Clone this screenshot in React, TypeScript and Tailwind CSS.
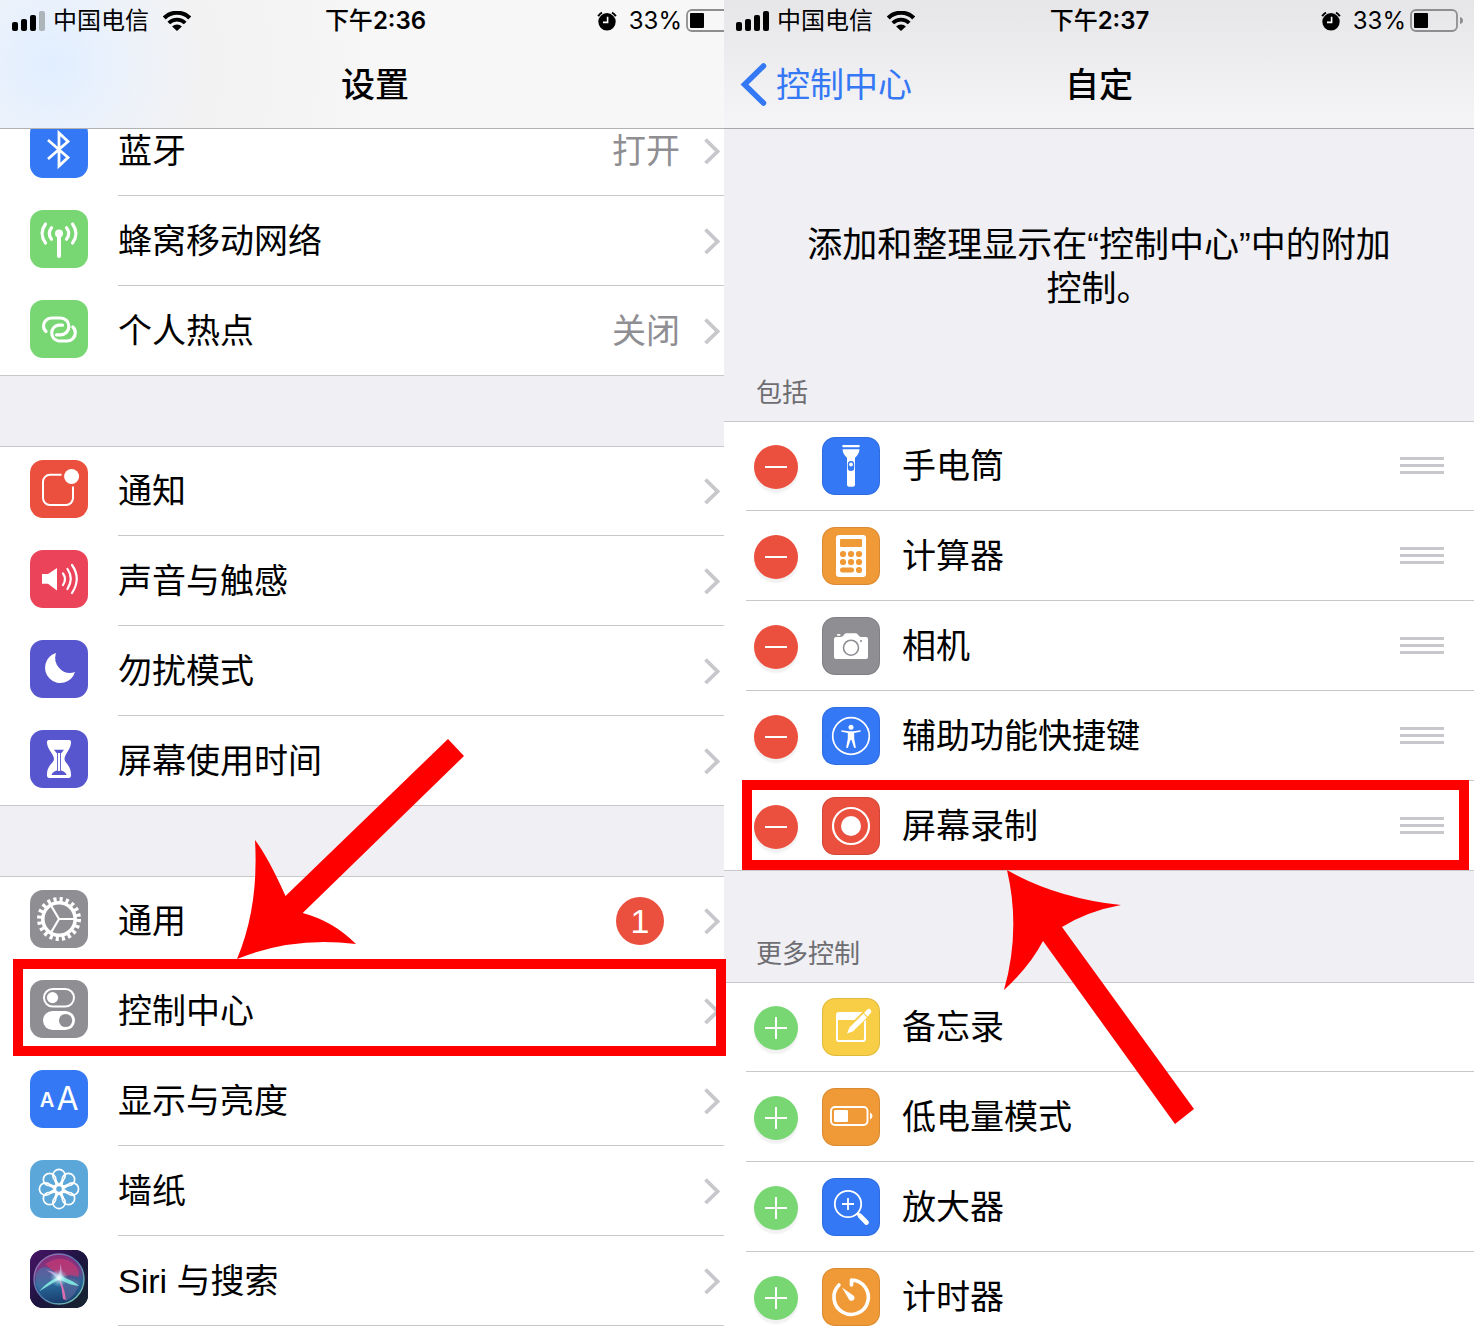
import type { ReactNode } from "react";

const ROTATIONS = [0, 45, 90, 135, 180, 225, 270, 315];

/* ---------- status bar ---------- */

function StatusBar({ time, weakSignal }: { time: string; weakSignal?: boolean }) {
  return (
    <div className="grid h-[41px] grid-cols-[1fr_auto_1fr] items-center pr-[11px] pl-3 font-['Inter','Noto_Sans_CJK_SC',sans-serif] text-2xl leading-8">
      <div className="flex items-center">
        <svg width="33" height="20" viewBox="0 0 33 20" aria-hidden="true">
          <rect x="0" y="11" width="6" height="9" rx="2" />
          <rect x="9" y="8" width="6" height="12" rx="2" />
          <rect x="18" y="4" width="6" height="16" rx="2" />
          <rect x="27" y="0" width="6" height="20" rx="2" fill={weakSignal ? "#adb4ba" : "#000"} />
        </svg>
        <span className="ml-2">中国电信</span>
        <svg className="ml-3.5" width="28" height="20" viewBox="0 0 28 20" aria-hidden="true">
          <path d="M1.3 7a18 18 0 0 1 25.400 0" fill="none" stroke="#000" strokeWidth="4.2" />
          <path d="M5.800 12a11.6 11.6 0 0 1 16.400 0" fill="none" stroke="#000" strokeWidth="3.8" />
          <path d="M14 20l-4.900-4.400a6.8 6.8 0 0 1 9.800 0z" />
        </svg>
      </div>
      <span className="font-semibold">
        <span className="font-medium">下午</span>
        {time}
      </span>
      <div className="flex items-center justify-end">
        <svg width="20" height="20" viewBox="0 0 20 20" aria-hidden="true">
          <circle cx="10" cy="10.8" r="8.7" />
          <path d="M1.2 5.2A9 9 0 0 1 5 1.6M18.8 5.2A9 9 0 0 0 15 1.6" fill="none" stroke="#000" strokeWidth="2" />
          <path d="M10.6 5.8v5.6H6" fill="none" stroke="#fff" strokeWidth="1.6" />
        </svg>
        <span className="ml-3">33%</span>
        <svg className="ml-1" width="53" height="23" viewBox="0 0 53 23" aria-label="33%">
          <rect x="1" y="1" width="46" height="21" rx="5" fill="none" stroke="#8e8e90" strokeWidth="1.8" />
          <rect x="4" y="4" width="14" height="15" rx="1" />
          <path d="M50 8q3 1 3 3.500t-3 3.500z" fill="#8e8e90" />
        </svg>
      </div>
    </div>
  );
}

/* ---------- glyphs, all on a 58 × 58 tile ---------- */

const line = { fill: "none", stroke: "#fff" } as const;

const glyphs: Record<string, ReactNode> = {
  bluetooth: <path {...line} strokeWidth="2.800" d="M18 20l20 17.500-9 8.500V13l9 8.500L18 39" />,
  cellular: (
    <g>
      <circle cx="29" cy="23.400" r="4" fill="#fff" />
      <path {...line} strokeWidth="4" strokeLinecap="round" d="M29 24v22" />
      <path
        {...line}
        strokeWidth="3.200"
        strokeLinecap="round"
        d="M15.500 14Q8.600 23.400 15.500 33M42.500 14q6.900 9.400 0 19M21.500 17.800q-4.500 5.700 0 11.400M36.500 17.800q4.500 5.700 0 11.400"
      />
    </g>
  ),
  hotspot: (
    <path
      {...line}
      strokeWidth="3.200"
      strokeLinecap="round"
      d="M16 31.500C14.200 30 13.500 28 13.500 26A8 8 0 0 1 21.500 18H30.500A8.400 8.400 0 0 1 30.500 34.800H26.500M42.800 27C44.500 28.500 45.300 30.500 45.300 32.800A8.200 8.200 0 0 1 37 41H28.500A8 8 0 0 1 28.500 25.200H32.500"
    />
  ),
  notifications: (
    <g>
      <path {...line} strokeWidth="2" d="M31.500 14.800H20a7 7 0 0 0-7 7V38a7 7 0 0 0 7 7H36a7 7 0 0 0 7-7V26.500" />
      <circle cx="41.600" cy="16.500" r="7.500" fill="#fff" />
    </g>
  ),
  sound: (
    <g>
      <path fill="#fff" d="M12 24h6l9-6v22.500l-9-6.700h-6z" />
      <path
        {...line}
        strokeWidth="2.200"
        strokeLinecap="round"
        d="M33 23.500q4 5.500 0 11.500M37.500 19q6.500 9.500 0 20M42 15q9.500 13.500 0 28"
      />
    </g>
  ),
  moon: <path fill="#fff" d="M26 13A15.300 15.300 0 1 0 45 32A15 15 0 0 1 26 13z" />,
  hourglass: (
    <g>
      <path
        fill="#fff"
        d="M19 10H39Q41.500 10 41 13C40.500 20 34.500 24 34.500 29C34.500 33 41 35 41 44.500Q41.500 48 39 48H19Q16.500 48 17 44.500C17 35 24 33 24 29C24 24 17.500 20 17 13Q16.500 10 19 10Z"
      />
      <path fill="#5856ce" d="M24 19.700h10L31 23.500V40.500q5 1.500 5.500 4.500h-15q.500-3 5.500-4.500V23.500z" />
      <path {...line} strokeWidth="2.200" d="M29 23v18" />
    </g>
  ),
  gear: (
    <g {...line}>
      <circle cx="29" cy="29" r="19.500" strokeWidth="5" strokeDasharray="3.100 3.026" />
      <circle cx="29" cy="29" r="16.200" strokeWidth="3.600" />
      <path strokeWidth="2.200" d="M29 29H45M29 29L21 15.500M29 29L21 42.500" />
    </g>
  ),
  switches: (
    <g>
      <rect {...line} x="14" y="9" width="30" height="17.500" rx="8.700" strokeWidth="2" />
      <circle cx="22.500" cy="17.600" r="5.600" fill="#fff" />
      <rect x="13" y="31" width="32" height="19" rx="9.500" fill="#fff" />
      <circle cx="35.600" cy="40.500" r="6.600" fill="#8e8e93" />
    </g>
  ),
  display: (
    <g fill="#fff" textAnchor="middle" fontFamily="Inter, sans-serif">
      <text x="17" y="37" fontSize="20" fontWeight="600">A</text>
      <text x="37.500" y="40" fontSize="32" fontWeight="400">A</text>
    </g>
  ),
  wallpaper: (
    <g {...line} strokeWidth="1.700">
      {ROTATIONS.map((deg) => (
        <path
          key={deg}
          transform={`rotate(${deg} 29 29)`}
          d="M29 25L25.500 20.500M29 25L32.500 20.500M24.600 20A6.200 6.200 0 1 1 33.400 20M24.600 20L27.500 25.500M33.400 20L30.500 25.500"
        />
      ))}
      <circle cx="29" cy="29" r="3.600" />
    </g>
  ),
  siri: (
    <g>
      <defs>
        <linearGradient id="siri-bg" x1="0" y1="0" x2="1" y2="1">
          <stop offset="0" stopColor="#4a1468" />
          <stop offset=".5" stopColor="#1d1440" />
          <stop offset="1" stopColor="#15272f" />
        </linearGradient>
        <linearGradient id="siri-orb" x1=".4" y1="0" x2=".5" y2="1">
          <stop offset="0" stopColor="#8a2a78" />
          <stop offset=".35" stopColor="#7a3a85" />
          <stop offset=".6" stopColor="#28699a" />
          <stop offset="1" stopColor="#183a6b" />
        </linearGradient>
        <linearGradient id="siri-ring" x1="0" y1="0" x2="1" y2="1">
          <stop offset="0" stopColor="#a86fb4" />
          <stop offset=".5" stopColor="#4f79ae" />
          <stop offset="1" stopColor="#82d8b4" />
        </linearGradient>
        <radialGradient id="siri-glow">
          <stop offset="0" stopColor="#fff" />
          <stop offset=".4" stopColor="#c9f4ff" stopOpacity=".6" />
          <stop offset="1" stopColor="#7fdcec" stopOpacity="0" />
        </radialGradient>
      </defs>
      <rect width="58" height="58" fill="url(#siri-bg)" />
      <circle cx="29" cy="29" r="25" fill="url(#siri-orb)" stroke="url(#siri-ring)" strokeWidth="1.400" />
      <path fill="#d63a70" opacity=".6" d="M15 14Q32 3 45 15Q51 22 48 27Q38 23 29 28Q22 20 15 14z" />
      <path fill="#4a72a8" opacity=".7" d="M6 24Q10 15 19 18Q27 22 29 28Q20 38 9 40Q5 32 6 24z" />
      <path fill="#5a679c" opacity=".7" d="M30 29Q42 26 50 32Q46 46 36 51Q32 40 30 29z" />
      <path fill="#7fe6dc" opacity=".95" d="M9 41.500Q16 33 26 28L30 24L35 28Q44 31 49 36Q39 35 33 31L28 30Q19 35 9 41.500z" />
      <path fill="#ee72b4" opacity=".9" d="M29 29Q34 35 36 50L33 49Q32 38 29 29z" />
      <path fill="#d9b4ea" opacity=".7" d="M30 13Q33 22 31 29L27 28Q20 22 16 20Q26 22 28 25Q31 20 30 13z" />
      <circle cx="29" cy="28" r="9" fill="url(#siri-glow)" />
    </g>
  ),
  flashlight: (
    <g fill="#fff">
      <rect x="20.300" y="8" width="17.400" height="2.200" rx=".8" />
      <path d="M20.500 12.300h17q-.300 4.700-4.500 8.500v27q0 2-2 2h-4q-2 0-2-2v-27q-4.200-3.800-4.500-8.500z" />
      <rect x="25.800" y="24" width="6.400" height="10" rx="3.200" fill="#3478f6" />
      <circle cx="29" cy="27.500" r="1.900" />
    </g>
  ),
  calculator: (
    <g>
      <rect x="14" y="8" width="30" height="42" rx="3" fill="#fff" />
      <g fill="#f09a37">
        <rect x="18" y="12" width="22" height="8" rx="1" />
        {[21, 29, 37].map((x) => (
          <g key={x}>
            <circle cx={x} cy="27" r="3.100" />
            <circle cx={x} cy="35" r="3.100" />
          </g>
        ))}
        <rect x="18" y="40.500" width="14" height="5" rx="2.500" />
        <circle cx="37" cy="43" r="3.100" />
      </g>
    </g>
  ),
  camera: (
    <g>
      <path
        fill="#fff"
        d="M14 20h5q2.500-.500 3.500-3l1.500-.700h10l1.500.700q1.500 2.500 3 3H44q2 0 2 2v18q0 2-2 2H14q-2 0-2-2V22q0-2 2-2zM15 18q0-1 1-1h1.500q1 0 1 1v.800H15z"
      />
      <circle cx="29" cy="30.700" r="7.500" fill="none" stroke="#8e8e93" strokeWidth="1.600" />
      <circle cx="39" cy="24" r="1.100" fill="#8e8e93" />
    </g>
  ),
  accessibility: (
    <g>
      <circle {...line} cx="29" cy="29" r="18.300" strokeWidth="1.700" />
      <circle cx="29" cy="20.300" r="2.500" fill="#fff" />
      <path
        fill="#fff"
        d="M19.500 23.200l7 1.100h5l7-1.100q.800.900-.200 1.500l-6.100 1.300v5.500l1.600 8.700q-.700 1.300-1.700.600L29.500 33h-1l-2.600 7.800q-1 .700-1.700-.600l1.600-8.700V26l-6.100-1.300q-1-.600-.200-1.500z"
      />
    </g>
  ),
  record: (
    <g>
      <circle {...line} cx="29" cy="29" r="18" strokeWidth="2.200" />
      <circle cx="29" cy="29" r="10" fill="#fff" />
    </g>
  ),
  notes: (
    <g>
      <rect {...line} x="15" y="15" width="28" height="28" rx="2" strokeWidth="2" />
      <path fill="#fff" d="M15 15H42L35 22H15z" />
      <path stroke="#f7ce46" strokeWidth="8" d="M30 30L49 11" />
      <path fill="#fff" d="M25 35.500L27.500 29.500L41.300 15.700L45 19.400L31.200 33.200z" />
      <path {...line} strokeWidth="5" d="M43.500 16.500L46 14" stroke="#f7ce46" />
      <path {...line} strokeWidth="5" strokeLinecap="round" d="M46 14.200l.800-.800" />
      <path fill="#fff" d="M42 15l1.800-1.800 3.600 3.600-1.800 1.800z" />
    </g>
  ),
  battery: (
    <g>
      <rect {...line} x="9" y="19" width="36.500" height="18" rx="4" strokeWidth="1.900" />
      <rect x="12" y="22" width="14" height="12" rx="1.200" fill="#fff" />
      <path fill="#fff" d="M48 24.500q2.500 1 2.500 3.500T48 31.500z" />
    </g>
  ),
  magnifier: (
    <g {...line}>
      <circle cx="26" cy="26" r="13.200" strokeWidth="1.800" />
      <path strokeWidth="1.800" d="M20 26h12M26 20v12" />
      <path strokeWidth="3" d="M35.300 35.300l3 3" />
      <path strokeWidth="4.800" strokeLinecap="round" d="M38 37.800l6.500 6.700" />
    </g>
  ),
  timer: (
    <g>
      <path {...line} strokeWidth="3.600" strokeLinecap="round" strokeLinejoin="round" d="M29.500 17V12A17.200 17.200 0 1 1 17 17" />
      <path fill="#fff" d="M20 19.500l11.300 7.900a3 3 0 1 1-4.300 4z" />
    </g>
  ),
};

function Tile({ glyph, color, className = "" }: { glyph: string; color: string; className?: string }) {
  return (
    <svg
      className={`shrink-0 overflow-hidden rounded-[13px] ${color} ${className}`}
      width="58"
      height="58"
      viewBox="0 0 58 58"
      aria-hidden="true"
    >
      {glyphs[glyph]}
    </svg>
  );
}

/* ---------- left: settings ---------- */

type Setting = { label: string; glyph: string; color: string; value?: string; badge?: number };

const settingGroups: Setting[][] = [
  [
    { label: "蓝牙", glyph: "bluetooth", color: "bg-[#3478f6]", value: "打开" },
    { label: "蜂窝移动网络", glyph: "cellular", color: "bg-[#78d673]" },
    { label: "个人热点", glyph: "hotspot", color: "bg-[#78d673]", value: "关闭" },
  ],
  [
    { label: "通知", glyph: "notifications", color: "bg-[#eb4f3d]" },
    { label: "声音与触感", glyph: "sound", color: "bg-[#eb445a]" },
    { label: "勿扰模式", glyph: "moon", color: "bg-[#5856ce]" },
    { label: "屏幕使用时间", glyph: "hourglass", color: "bg-[#5856ce]" },
  ],
  [
    { label: "通用", glyph: "gear", color: "bg-[#8e8e93]", badge: 1 },
    { label: "控制中心", glyph: "switches", color: "bg-[#8e8e93]" },
    { label: "显示与亮度", glyph: "display", color: "bg-[#3478f6]" },
    { label: "墙纸", glyph: "wallpaper", color: "bg-[#5ba7d9]" },
    { label: "Siri 与搜索", glyph: "siri", color: "bg-[#1d1440]" },
  ],
];

function SettingRow({ item, last }: { item: Setting; last: boolean }) {
  return (
    <li>
      <a href="#" className="flex h-[90px] items-center pl-[30px]">
        <Tile glyph={item.glyph} color={item.color} className="mb-1" />
        <span
          className={`ml-[30px] flex h-full flex-1 items-center border-b pr-[30px] ${
            last ? "border-transparent" : "border-[#c8c7cc]"
          }`}
        >
          <span className="flex-1">{item.label}</span>
          {item.value && <span className="mr-6 text-[#8e8e93]">{item.value}</span>}
          {item.badge && (
            <span className="mr-10 flex size-12 items-center justify-center rounded-full bg-[#eb4f3d] text-white">
              {item.badge}
            </span>
          )}
          <svg width="16" height="26" viewBox="0 0 16 26" aria-hidden="true">
            <path d="M1.500 1.500L13.500 13.500L1.500 25" fill="none" stroke="#c7c7cc" strokeWidth="3.800" />
          </svg>
        </span>
      </a>
    </li>
  );
}

function SettingsScreen() {
  return (
    <section className="relative z-10 h-full">
      <div className="h-full overflow-hidden">
        {/* the phone is a little wider than its column, so the right edge is cut */}
        <div className="-mr-[26px] flex h-full flex-col bg-[#efeff4]">
          <header className="z-10 h-[129px] shrink-0 border-b border-[#b2b2b2] bg-[#f7f7f7] bg-[radial-gradient(circle_at_50px_64px,#e1eeff_0px,#e9f1fc_60px,#eef2f8_95px,#f2f2f3_150px,#f3f3f3_220px,#f7f7f7_340px)]">
            <StatusBar time="2:36" weakSignal />
            <h1 className="py-5 text-center leading-12 font-medium">设置</h1>
          </header>
          <div className="-mt-[23px] flex flex-1 flex-col gap-[70px]">
            {settingGroups.map((group, i) => {
              const open = i === settingGroups.length - 1;
              return (
                <ul
                  key={i}
                  className={
                    open
                      ? "flex-1 bg-white shadow-[inset_0_1px_0_#c8c7cc]"
                      : "bg-white shadow-[inset_0_1px_0_#c8c7cc,inset_0_-1px_0_#c8c7cc]"
                  }
                >
                  {group.map((item, n) => (
                    <SettingRow key={item.label} item={item} last={!open && n === group.length - 1} />
                  ))}
                </ul>
              );
            })}
          </div>
        </div>
      </div>

      <div className="pointer-events-none absolute top-[959px] -right-[2px] left-[13px] h-[97px] border-10 border-[#ff0000]" />
      <svg
        className="pointer-events-none absolute top-[739px] left-[237px]"
        width="227"
        height="220"
        viewBox="237 739 227 220"
        aria-hidden="true"
      >
        <path
          fill="#f00"
          d="M237 959Q259 907 255 840Q268 857 285.500 896L448 739L464 756L302.700 913Q333 921 356 944Q293 936 237 959z"
        />
      </svg>
    </section>
  );
}

/* ---------- right: customize controls ---------- */

type Control = { label: string; glyph: string; color: string };

const included: Control[] = [
  { label: "手电筒", glyph: "flashlight", color: "bg-[#3478f6]" },
  { label: "计算器", glyph: "calculator", color: "bg-[#f09a37]" },
  { label: "相机", glyph: "camera", color: "bg-[#8e8e93]" },
  { label: "辅助功能快捷键", glyph: "accessibility", color: "bg-[#3478f6]" },
  { label: "屏幕录制", glyph: "record", color: "bg-[#eb4f3d]" },
];

const more: Control[] = [
  { label: "备忘录", glyph: "notes", color: "bg-[#f7ce46]" },
  { label: "低电量模式", glyph: "battery", color: "bg-[#f09a37]" },
  { label: "放大器", glyph: "magnifier", color: "bg-[#3478f6]" },
  { label: "计时器", glyph: "timer", color: "bg-[#f09a37]" },
];

function ControlList({ title, items, removable }: { title: string; items: Control[]; removable?: boolean }) {
  return (
    <>
      <h2 className="px-8 pb-2.5 text-[26px] leading-9 text-[#6d6d72]">{title}</h2>
      <ul className="bg-white shadow-[inset_0_1px_0_#c8c7cc,inset_0_-1px_0_#c8c7cc]">
        {items.map((item, n) => (
          <li key={item.label} className="h-[90px] pl-[22px]">
            <div
              className={`flex h-full items-center border-b pr-[30px] pl-2 ${
                n === items.length - 1 ? "border-transparent" : "border-[#c8c7cc]"
              }`}
            >
              <button
                type="button"
                aria-label={`${removable ? "移除" : "添加"}${item.label}`}
                className={`mt-0.5 size-11 rounded-full shadow-[0_4px_2px_#f1f1f1] ${
                  removable ? "bg-[#eb4f3d]" : "bg-[#78d673]"
                }`}
              >
                <svg width="44" height="44" viewBox="0 0 44 44">
                  <path d={removable ? "M11 22H33" : "M11 22H33M22 11V33"} stroke="#fff" strokeWidth="2" />
                </svg>
              </button>
              <Tile
                glyph={item.glyph}
                color={item.color}
                className="ml-6 outline-1 -outline-offset-1 outline-black/10"
              />
              <span className="ml-[22px] flex-1">{item.label}</span>
              {removable && (
                <span className="flex w-11 flex-col gap-1">
                  <span className="h-[3px] bg-[#c7c7cc]" />
                  <span className="h-[3px] bg-[#c7c7cc]" />
                  <span className="h-[3px] bg-[#c7c7cc]" />
                </span>
              )}
            </div>
          </li>
        ))}
      </ul>
    </>
  );
}

function CustomizeScreen() {
  return (
    <section className="relative h-full overflow-hidden bg-[#efeff4]">
      <header className="h-[129px] border-b border-[#a7a7ac] bg-linear-to-b from-[#e6e6e8] to-[#f5f5f7]">
        <StatusBar time="2:37" />
        <div className="grid grid-cols-[1fr_auto_1fr] items-center py-5 pl-4">
          <button type="button" className="flex items-center gap-2 justify-self-start text-[#3478f6]">
            <svg width="28" height="44" viewBox="0 0 28 44" aria-hidden="true">
              <path
                d="M23.500 3L4.500 21.500L23.500 40"
                fill="none"
                stroke="currentColor"
                strokeWidth="5.500"
                strokeLinecap="round"
              />
            </svg>
            控制中心
          </button>
          <h1 className="pr-4 font-medium">自定</h1>
        </div>
      </header>
      <p className="px-[70px] pt-[94px] pb-16 text-center text-[35px] leading-11">
        添加和整理显示在“控制中心”中的附加
        <br />
        控制。
      </p>
      <ControlList title="包括" items={included} removable />
      <div className="h-[65px]" />
      <ControlList title="更多控制" items={more} />

      <div className="pointer-events-none absolute top-[780px] right-[5px] left-[18px] h-[90px] border-10 border-[#ff0000]" />
      <svg
        className="pointer-events-none absolute top-[870px] left-[280px]"
        width="190"
        height="254"
        viewBox="1004 870 190 254"
        aria-hidden="true"
      >
        <path
          fill="#f00"
          d="M1007 870Q1056 898 1121 905Q1088 911 1062 927L1194 1109L1175 1124L1043 941Q1030 966 1004 990Q1021 930 1007 870z"
        />
      </svg>
    </section>
  );
}

export default function App() {
  return (
    <main
      lang="zh-CN"
      className="grid h-screen grid-cols-[724fr_750fr] overflow-hidden bg-white font-['Liberation_Sans','Noto_Sans_CJK_SC',sans-serif] text-[34px] leading-12 text-black *:min-w-0"
    >
      <SettingsScreen />
      <CustomizeScreen />
    </main>
  );
}
